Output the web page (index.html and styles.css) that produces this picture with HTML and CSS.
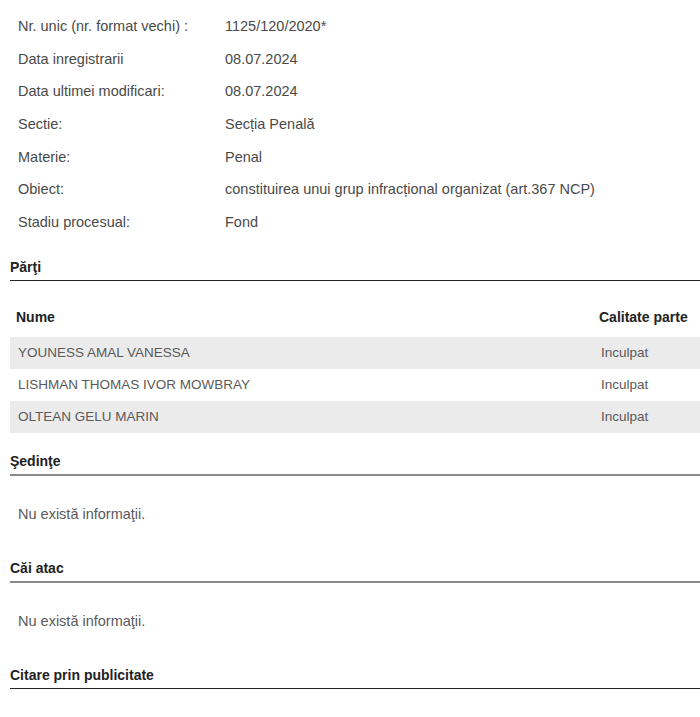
FILE: index.html
```html
<!DOCTYPE html>
<html lang="ro">
<head>
<meta charset="UTF-8">
<meta name="viewport" content="width=device-width, initial-scale=1.0">
<title>Dosar 1125/120/2020*</title>
<link rel="stylesheet" href="styles.css">
</head>
<body>
    <div class="page">
        <!-- detalii dosar -->
        <div class="details">
            <div class="label">Nr. unic (nr. format vechi) :</div>
            <div class="value">1125/120/2020*</div>
            <div class="label">Data inregistrarii</div>
            <div class="value">08.07.2024</div>
            <div class="label">Data ultimei modificari:</div>
            <div class="value">08.07.2024</div>
            <div class="label">Sectie:</div>
            <div class="value">Secția Penală</div>
            <div class="label">Materie:</div>
            <div class="value">Penal</div>
            <div class="label">Obiect:</div>
            <div class="value">constituirea unui grup infracțional organizat (art.367 NCP)</div>
            <div class="label">Stadiu procesual:</div>
            <div class="value">Fond</div>
        </div>

        <!-- parti -->
        <h2 class="section-title">Părţi</h2>
        <div class="parties">
            <div class="parties-row parties-head">
                <div>Nume</div>
                <div>Calitate parte</div>
            </div>
            <div class="parties-row odd">
                <div>YOUNESS AMAL VANESSA</div>
                <div>Inculpat</div>
            </div>
            <div class="parties-row">
                <div>LISHMAN THOMAS IVOR MOWBRAY</div>
                <div>Inculpat</div>
            </div>
            <div class="parties-row odd">
                <div>OLTEAN GELU MARIN</div>
                <div>Inculpat</div>
            </div>
        </div>

        <!-- sedinte -->
        <h2 class="section-title light">Şedinţe</h2>
        <p class="empty">Nu există informaţii.</p>

        <!-- cai atac -->
        <h2 class="section-title light">Căi atac</h2>
        <p class="empty">Nu există informaţii.</p>

        <!-- citare -->
        <h2 class="section-title">Citare prin publicitate</h2>
    </div>
</body>
</html>
```

FILE: styles.css
```css
body, html {
    margin: 0;
    background: white;
    color: #4a4a4a;
    font-family: "Liberation Sans", Arial, sans-serif;
    font-size: 14.5px;
}
.page {
    padding: 10px 0 0 10px;
}
.details {
    display: grid;
    grid-template-columns: 215px 1fr;
    line-height: 32.67px;
}
.details .label {
    padding-left: 8px;
}
.section-title {
    margin: 20px 0 0 0;
    padding-bottom: 4px;
    font-size: 14px;
    line-height: 17px;
    font-weight: bold;
    color: #222;
    border-bottom: 1px solid #222;
}
.section-title.light {
    border-bottom: 2px solid #8a8a8a;
}
.parties {
    margin: 20px 0 2px 0;
}
.parties-row {
    display: grid;
    grid-template-columns: 583px 1fr;
    height: 32px;
    align-items: center;
    font-size: 13.5px;
    color: #5a5a5a;
}
.parties-row > div {
    padding-left: 8px;
}
.parties-row.odd {
    background-color: #ebebeb;
}
.parties-head {
    height: 36px;
    align-items: start;
    font-size: 14px;
    font-weight: bold;
    color: #222;
}
.parties-head > div {
    padding-top: 8px;
    padding-left: 6px;
    line-height: 17px;
}
.empty {
    margin: 0 0 20px 0;
    padding: 28px 8px 16px 8px;
    line-height: 20px;
    color: #5a5a5a;
}
```
